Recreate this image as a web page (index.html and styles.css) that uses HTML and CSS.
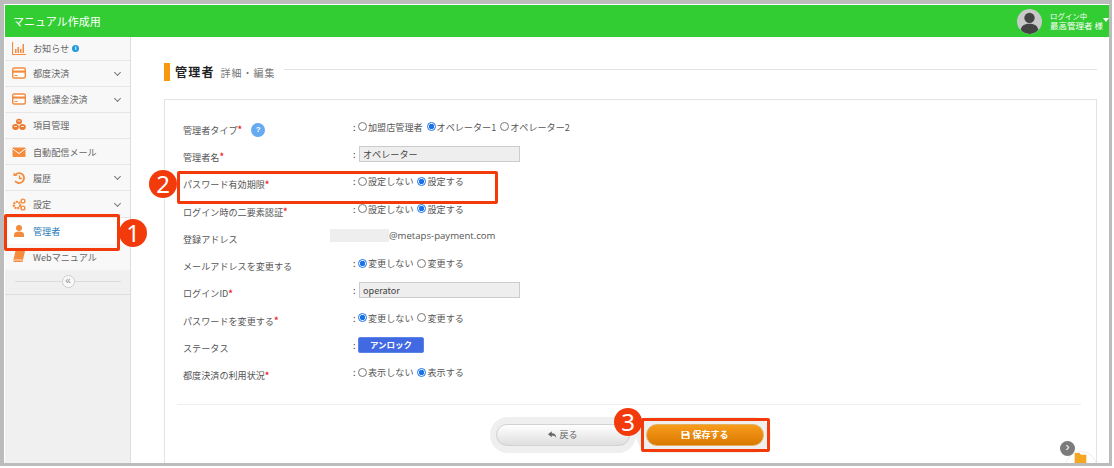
FILE: index.html
```html
<!DOCTYPE html>
<html lang="ja">
<head>
<meta charset="utf-8">
<title>マニュアル作成用</title>
<link rel="stylesheet" href="styles.css">
</head>
<body>
<div class="frame">
  <header class="topbar">
    <div class="brand">マニュアル作成用</div>
    <div class="user">
      <svg class="avatar" viewBox="0 0 24 24"><circle cx="12" cy="12" r="12" fill="#c9c9c9"/><circle cx="12" cy="8.5" r="5" fill="#444"/><path d="M3.5 20c1-4.500 4.500-5.800 8.500-5.800s7.500 1.300 8.500 5.800c-2 2.400-5 4-8.500 4s-6.500-1.600-8.500-4z" fill="#444"/></svg>
      <div class="user-text"><span class="user-small">ログイン中</span><span>最高管理者 様</span></div>
      <span class="caret"></span>
    </div>
  </header>
  <div class="body">
    <nav class="side">
      <a class="nav first"><svg class="ico" viewBox="0 0 14 14"><path d="M.5 1v12.500H14" fill="none" stroke="#f58b3c" stroke-width="1.200"/><path d="M3 8h1.500v4H3zM5.500 6H7v6H5.500zM8 8h1.500v4H8zM10.500 3H12v9h-1.500z" fill="#f58b3c"/></svg><span>お知らせ</span><i class="info">i</i></a>
      <a class="nav"><svg class="ico" viewBox="0 0 14 14"><rect x=".7" y="2" width="12.600" height="10" rx="1.500" fill="#fff" stroke="#f58b3c" stroke-width="1.400"/><path d="M1 4.500h12v2.200H1z" fill="#f58b3c"/><path d="M2.500 9.500h3" stroke="#f58b3c"/></svg><span>都度決済</span><b class="chev"></b></a>
      <a class="nav"><svg class="ico" viewBox="0 0 14 14"><rect x=".7" y="2" width="12.600" height="10" rx="1.500" fill="#fff" stroke="#f58b3c" stroke-width="1.400"/><path d="M1 4.500h12v2.200H1z" fill="#f58b3c"/><path d="M2.500 9.500h3" stroke="#f58b3c"/></svg><span>継続課金決済</span><b class="chev"></b></a>
      <a class="nav"><svg class="ico" viewBox="0 0 14 14"><g fill="#ee7a30"><ellipse cx="7" cy="3.500" rx="3" ry="2.800"/><ellipse cx="3.500" cy="9" rx="3.300" ry="3"/><ellipse cx="10.500" cy="9" rx="3.300" ry="3"/></g><path d="M5.500 3h3M2 8.500h3M9 8.500h3" stroke="#fff" stroke-width=".8"/></svg><span>項目管理</span></a>
      <a class="nav"><svg class="ico" viewBox="0 0 14 14"><rect x=".5" y="2.500" width="13" height="9.500" rx="1" fill="#f58b3c"/><path d="M.8 4 7 8.500 13.200 4" fill="none" stroke="#fff" stroke-width="1"/></svg><span>自動配信メール</span></a>
      <a class="nav"><svg class="ico" viewBox="0 0 14 14"><path d="M3.500 3.500A5 5 0 1 1 3 10" fill="none" stroke="#f58b3c" stroke-width="1.800"/><path d="M1.500 1.500 5.500 5H1.500z" fill="#f58b3c"/><path d="M7.500 4.500v3h2.500" fill="none" stroke="#f58b3c" stroke-width="1.300"/></svg><span>履歴</span><b class="chev"></b></a>
      <a class="nav"><svg class="ico" viewBox="0 0 14 14"><circle cx="5" cy="8" r="3.200" fill="none" stroke="#f58b3c" stroke-width="2.200" stroke-dasharray="2 .7"/><circle cx="11" cy="4" r="1.900" fill="none" stroke="#f58b3c" stroke-width="1.400"/><circle cx="11" cy="11" r="1.900" fill="none" stroke="#f58b3c" stroke-width="1.400"/></svg><span>設定</span><b class="chev"></b></a>
      <a class="nav active"><svg class="ico" viewBox="0 0 14 14"><circle cx="7" cy="4" r="3" fill="#f58b3c"/><path d="M2 13v-2.500C2 8.500 4 7.500 7 7.500s5 1 5 3V13z" fill="#f58b3c"/></svg><span>管理者</span></a>
      <a class="nav last"><svg class="ico" viewBox="0 0 14 14"><path d="M3.500 1H13l-2.500 11H1z" fill="#f58b3c"/><path d="M1 12c.3-1.500 1.500-2 2.500-2h7" fill="none" stroke="#fff" stroke-width=".8"/></svg><span>Webマニュアル</span></a>
      <div class="collapse-row"><span class="collapse-line"></span><span class="collapse">«</span><span class="collapse-line"></span></div>
    </nav>
    <main class="main">
      <div class="title-row">
        <span class="title-bar"></span>
        <h1 class="title">管理者</h1>
        <span class="subtitle">詳細・編集</span>
        <span class="title-line"></span>
      </div>
      <section class="card">
        <div class="form">
          <div class="label">管理者タイプ<em>*</em><span class="help">?</span></div>
          <div class="colon">:</div>
          <div class="value"><i class="radio"></i>加盟店管理者<i class="radio on gap"></i>オペレーター1<i class="radio gap"></i>オペレーター2</div>

          <div class="label">管理者名<em>*</em></div>
          <div class="colon">:</div>
          <div class="value"><span class="input">オペレーター</span></div>

          <div class="label">パスワード有効期限<em>*</em></div>
          <div class="colon">:</div>
          <div class="value"><i class="radio"></i>設定しない<i class="radio on gap"></i>設定する</div>

          <div class="label">ログイン時の二要素認証<em>*</em></div>
          <div class="colon">:</div>
          <div class="value"><i class="radio"></i>設定しない<i class="radio on gap"></i>設定する</div>

          <div class="label">登録アドレス</div>
          <div class="colon"></div>
          <div class="value email"><span class="mask"></span>@metaps-payment.com</div>

          <div class="label">メールアドレスを変更する</div>
          <div class="colon">:</div>
          <div class="value"><i class="radio on"></i>変更しない<i class="radio gap"></i>変更する</div>

          <div class="label">ログインID<em>*</em></div>
          <div class="colon">:</div>
          <div class="value"><span class="input">operator</span></div>

          <div class="label">パスワードを変更する<em>*</em></div>
          <div class="colon">:</div>
          <div class="value"><i class="radio on"></i>変更しない<i class="radio gap"></i>変更する</div>

          <div class="label">ステータス</div>
          <div class="colon">:</div>
          <div class="value"><span class="status">アンロック</span></div>

          <div class="label">都度決済の利用状況<em>*</em></div>
          <div class="colon">:</div>
          <div class="value"><i class="radio"></i>表示しない<i class="radio on gap"></i>表示する</div>
        </div>
        <div class="divider"></div>
        <div class="actions">
          <div class="halo back-halo"><span class="btn back"><svg class="btn-ico" viewBox="0 0 12 10"><path d="M5 0 0 4l5 4V5.500c3 0 5 .8 6 3.500 0-4-2-6.500-6-6.500z" fill="#666"/></svg>戻る</span></div>
          <div class="halo save-halo"><span class="btn save"><svg class="btn-ico" viewBox="0 0 10 10"><path d="M0 0h8l2 2v8H0z" fill="#fff"/><path d="M2 1h5v2.500H2zM2 6h6v3H2z" fill="#e98a10"/></svg>保存する</span></div>
        </div>
      </section>
    </main>
  </div>
  <span class="float-ring"></span>
  <span class="float-toggle">›</span>
  <svg class="folder" viewBox="0 0 14 12"><path d="M0 0h6l1.500 2H14v12H0z" fill="#f5a623"/></svg>
</div>

<div class="mark box-1"></div>
<div class="mark box-2"></div>
<div class="mark box-3"></div>
<div class="badge badge-1">1</div>
<div class="badge badge-2">2</div>
<div class="badge badge-3">3</div>
</body>
</html>
```

FILE: styles.css
```css
* { box-sizing: border-box; }
html, body { margin: 0; height: 100%; background: #fff; overflow: hidden; }
body { font-family: "Noto Sans CJK JP", "Noto Sans", sans-serif; font-size: 9.1px; color: #555; position: relative; }

.frame {
  position: relative;
  width: 1112px;
  height: 466px;
  border: 4px solid #bcbcbc;
  border-width: 4px 3px 3px 4px;
  padding: 1px 0 0 1px;
  background: #fff;
  overflow: hidden;
  display: flex;
  flex-direction: column;
}

.topbar {
  flex: 0 0 32px;
  background: #32cd32;
  color: #fff;
  display: flex;
  align-items: center;
  justify-content: space-between;
  padding-left: 8px;
}
.brand { font-size: 11px; }
.user { display: flex; align-items: center; }
.avatar { width: 25px; height: 25px; margin-right: 8px; }
.user-text { display: flex; flex-direction: column; font-size: 8.500px; line-height: 10.500px; }
.user-small { font-size: 7.400px; line-height: 9px; }
.caret { width: 0; height: 0; border: 3px solid transparent; border-top: 4px solid #fff; border-bottom: 0; margin: 0 0 2px 0; }

.body { flex: 1; display: flex; min-height: 0; }

.side { flex: 0 0 126px; background: #f0f0f0; border-right: 1px solid #ddd; }
.nav {
  display: flex;
  align-items: center;
  height: 26.200px;
  padding-left: 7px;
  background: #f8f8f8;
  border-bottom: 1px solid #e6e6e6;
  color: #666;
}
.nav.first { height: 23.500px; }
.nav.active { background: #fff; color: #2b7bb9; height: 26.500px; border-bottom: 0; }
.nav.last { height: 25.500px; border-bottom: 0; }
.ico { width: 14px; height: 14px; margin-right: 7px; flex: none; }
.info {
  width: 7px; height: 7px; border-radius: 50%; background: #1e9bdc; color: #fff;
  font: bold 6px/7px "Liberation Sans", sans-serif; text-align: center; margin-left: 3px;
}
.chev {
  width: 5px; height: 5px; margin-left: auto; margin-right: 10px; margin-top: -2px;
  border-right: 1px solid #777; border-bottom: 1px solid #777; transform: rotate(45deg);
}
.collapse-row { height: 25px; display: flex; align-items: center; gap: 0; padding: 0 9px 0 10px; border-bottom: 1px solid #ddd; }
.collapse-line { flex: 1; height: 1px; background: #dcdcdc; }
.collapse {
  width: 13px; height: 13px; border-radius: 50%; border: 1px solid #ccc; background: #fafafa; color: #888;
  font: 10px/10px "Liberation Sans", sans-serif; text-align: center;
}

.main { flex: 1; min-width: 0; padding: 26px 12px 0 33px; background: #fff; }
.title-row { display: flex; align-items: center; height: 18px; }
.title-bar { width: 6px; height: 18px; background: #f7980f; margin-right: 5px; }
.title { margin: 0 6px 0 0; font-size: 12px; font-weight: 700; color: #222; letter-spacing: 1.200px; line-height: 18px; }
.subtitle { font-size: 10px; color: #777; letter-spacing: 1px; margin-right: 8px; }
.title-line { flex: 1; height: 1px; background: #e3e3e3; margin-top: -5px; }

.card {
  margin-top: 18px;
  height: 366px;
  border: 1px solid #e3e3e3;
  border-bottom: 0;
  padding: 16px 15px 0 12px;
}
.form { display: grid; grid-template-columns: 170px 5px 1fr; grid-auto-rows: 27.300px; padding-left: 6px; }
.label, .colon, .value { display: flex; align-items: center; white-space: nowrap; }
.label em { color: #f02020; font-style: normal; font-weight: 700; line-height: 9px; }
.colon, .value { padding-bottom: 6px; }
.colon { color: #444; }
.help {
  width: 14px; height: 14px; border-radius: 50%; background: #66aaf2; color: #fff; margin-left: 9px;
  font: bold 8px/14px "Liberation Sans", sans-serif; text-align: center;
}
.radio {
  width: 9px; height: 9px; border-radius: 50%; border: 1px solid #777; background: #fff; margin-right: 1px; flex: none;
}
.radio.on { border-color: #1a73e8; background: radial-gradient(circle, #1a73e8 0 2.500px, #fff 3px); }
.radio.gap { margin-left: 4px; }
.input {
  width: 161px; height: 16px; margin-left: 1px; padding-left: 3px;
  background: #eee; border: 1px solid #ccc; display: flex; align-items: center; color: #444;
}
.email { font-family: "Open Sans", sans-serif; font-size: 9.600px; margin-left: -28px; padding-bottom: 6px; }
.mask { width: 59px; height: 13px; background: #eee; }
.status {
  width: 66px; height: 16px; background: #4169e1; border: 1px solid #5b83e8; border-radius: 2px; color: #fff;
  font-weight: 700; font-size: 8.500px; line-height: 13px; text-align: center;
}

.divider { height: 1px; background: #eee; margin-top: 15px; }
.actions { display: flex; align-items: flex-start; margin: 12px 0 0 313px; }
.halo { height: 36px; background: #efefef; border-radius: 18px; display: flex; align-items: center; }
.back-halo { width: 146px; padding-left: 6px; }
.save-halo { width: 135px; padding-left: 10px; margin-left: 0; }
.btn { height: 22px; border-radius: 11px; display: flex; align-items: center; justify-content: center; font-size: 9px; }
.back { width: 134px; background: linear-gradient(#fff, #dedede); border: 1px solid #d2d2d2; color: #666; }
.save { width: 118px; background: linear-gradient(#f89c1c, #d97800); color: #fff; font-weight: 700; border: 1px solid #e2b060; }
.btn-ico { width: 9px; height: 8px; margin-right: 2px; }

.float-toggle {
  position: absolute; right: 34px; bottom: 7px; width: 15px; height: 15px; border-radius: 50%;
  background: #7b7b7b; color: #fff; font: 12px/13px "Liberation Sans", sans-serif; text-align: center;
}
.float-ring { position: absolute; right: 12px; bottom: -20px; width: 32px; height: 32px; border: 1px solid #eee; border-radius: 50%; }
.folder { position: absolute; right: 22px; bottom: 0; width: 13px; height: 10px; }

.mark { position: absolute; border: 3px solid #f23a0b; border-radius: 2px; }
.box-1 { left: 4px; top: 214px; width: 116px; height: 37px; }
.box-2 { left: 177px; top: 171px; width: 321px; height: 33px; }
.box-3 { left: 641px; top: 418px; width: 129px; height: 34px; }

.badge {
  position: absolute; width: 28px; height: 28px; border-radius: 50%; background: #f23a0b; color: #fff;
  font: 24px/28px "Noto Sans", sans-serif; text-align: center;
}
.badge-1 { left: 119px; top: 219px; }
.badge-2 { left: 149px; top: 170px; }
.badge-3 { left: 614px; top: 408px; }
```
